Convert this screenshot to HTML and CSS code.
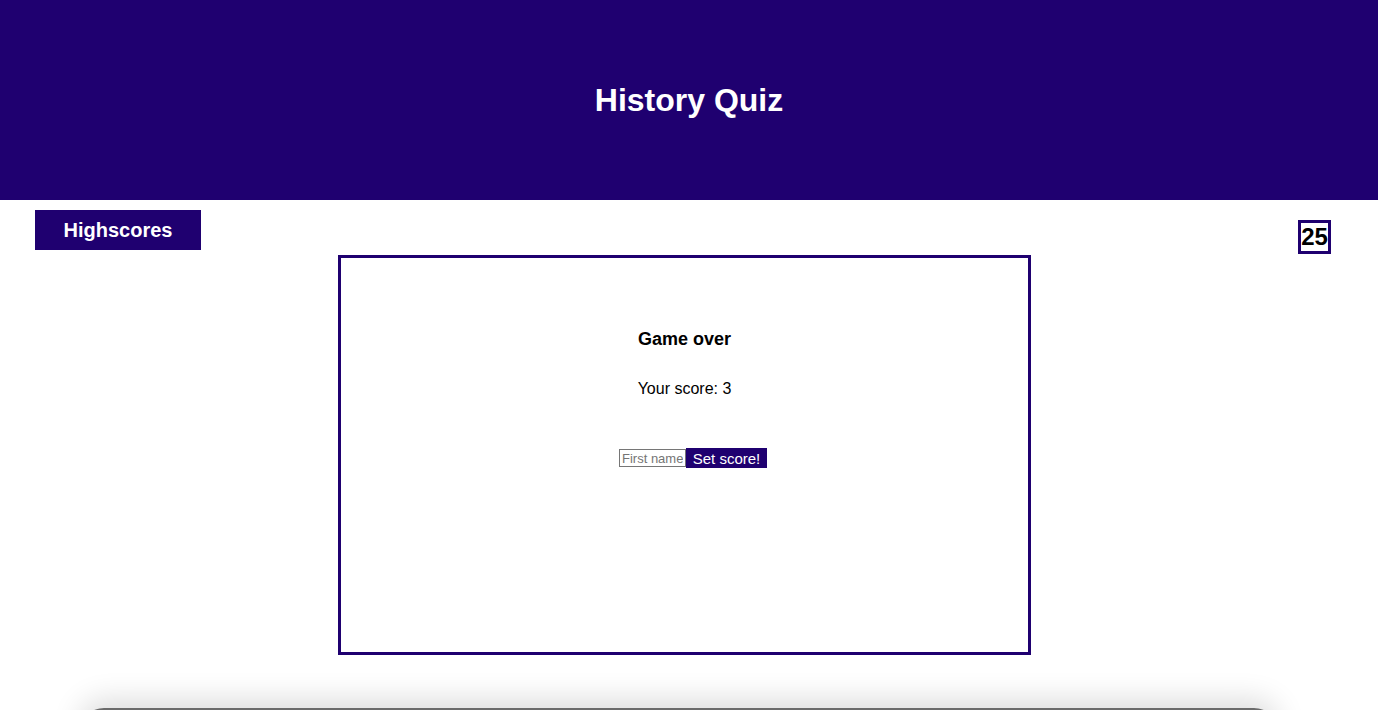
FILE: index.html
```html
<!DOCTYPE html>
<html>
<head>
<meta charset="utf-8">
<title>History Quiz</title>
<link rel="stylesheet" href="styles.css">
</head>
<body>
<header class="header">
  <h1 class="title">History Quiz</h1>
</header>
<div class="toolbar">
  <button class="highscores">Highscores</button>
  <div class="timer">25</div>
</div>
<main class="card">
  <h3 class="card-title">Game over</h3>
  <p class="score">Your score: 3</p>
  <form class="score-form">
    <input class="name-input" type="text" placeholder="First name">
    <button class="submit" type="button">Set score!</button>
  </form>
</main>
<div class="footer"></div>
</body>
</html>
```
FILE: styles.css
```css
html, body {
  margin: 0;
  padding: 0;
  background: #fff;
  font-family: "Liberation Sans", Arial, sans-serif;
  overflow: hidden;
  height: 710px;
}
.header {
  height: 200px;
  background: #1f0070;
  display: flex;
  align-items: center;
  justify-content: center;
}
.title {
  margin: 0;
  color: #fff;
  font-size: 32px;
  font-weight: bold;
}
.toolbar {
  display: flex;
  justify-content: space-between;
  align-items: flex-start;
  height: 50px;
}
.highscores {
  margin: 10px 0 0 35px;
  width: 166px;
  height: 40px;
  border: none;
  background: #1f0070;
  color: #fff;
  font-family: "Liberation Sans", Arial, sans-serif;
  font-size: 20px;
  font-weight: bold;
  padding: 0;
}
.timer {
  margin: 20px 47px 0 0;
  border: 3px solid #1f0070;
  font-size: 24px;
  font-weight: bold;
  line-height: 28px;
  width: 27px;
  text-align: center;
  color: #000;
}
.card {
  margin: 5px 0 0 338px;
  width: 687px;
  height: 394px;
  border: 3px solid #1f0070;
  text-align: center;
  display: flex;
  flex-direction: column;
  align-items: center;
}
.card-title {
  margin: 71px 0 0;
  font-size: 18px;
  line-height: 21px;
  font-weight: bold;
}
.score {
  margin: 30px 0 0;
  font-size: 16px;
  line-height: 18px;
}
.score-form {
  margin: 50px 0 0 17px;
  display: flex;
  align-items: center;
}
.name-input {
  width: 61px;
  height: 14px;
  padding: 1px 2px;
  margin: 0;
  border: 1px solid #767676;
  font-family: "Liberation Sans", Arial, sans-serif;
  font-size: 13px;
}
.name-input::placeholder {
  color: #757575;
}
.submit {
  height: 20px;
  width: 81px;
  margin: 0;
  border: none;
  padding: 0;
  background: #1f0070;
  color: #fff;
  font-family: "Liberation Sans", Arial, sans-serif;
  font-size: 15px;
}
.footer {
  margin: 53px 100px 0 80px;
  height: 40px;
  border-top: 2px solid #6b6b6b;
  border-radius: 24px 24px 0 0;
  box-shadow: 0 -8px 30px rgba(0, 0, 0, 0.14);
}
```
